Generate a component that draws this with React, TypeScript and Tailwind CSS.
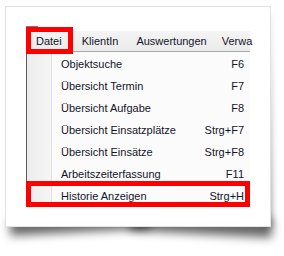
const items: [string, string][] = [
  ["Objektsuche", "F6"],
  ["Übersicht Termin", "F7"],
  ["Übersicht Aufgabe", "F8"],
  ["Übersicht Einsatzplätze", "Strg+F7"],
  ["Übersicht Einsätze", "Strg+F8"],
  ["Arbeitszeiterfassung", "F11"],
  ["Historie Anzeigen", "Strg+H"],
];

export default function App() {
  return (
    <div
      className="relative w-[284px] h-[256px] bg-white pl-[5px] pt-[6px] overflow-hidden"
      style={{ fontFamily: '"Liberation Sans", Arial, sans-serif' }}
    >
      {/* lifted corner shadows */}
      <div className="absolute left-[10px] top-[216px] w-[140px] h-[16px] bg-black/60 blur-[5px] -rotate-[3deg]" />
      <div className="absolute left-[130px] top-[216px] w-[142px] h-[18px] bg-black/60 blur-[5px] rotate-[3deg]" />
      <div className="absolute left-[262px] top-[14px] w-[10px] h-[212px] bg-gradient-to-b from-black/5 to-black/40 blur-[3px]" />

      <div className="relative w-[266px] h-[221px] bg-white border border-[#e2e2e2] pl-[20px] pt-[19px]">
        <div className="relative w-[224px] h-[181px] text-[11px] text-[#14142a]">
          {/* window edge left */}
          <div className="absolute left-0 top-0 w-[12px] h-[2px] bg-[#7a7a7a]" />
          <div className="h-[5px] border-l border-[#5c5c5c]" />

          {/* menu bar */}
          <div className="flex items-center h-[21px] bg-gradient-to-b from-[#f4f4f4] to-[#ebebeb] border-b border-[#a8a8a8] border-l border-l-[#5c5c5c]">
            <span className="ml-[9px]">Datei</span>
            <span className="ml-[20px]">KlientIn</span>
            <span className="ml-[18px]">Auswertungen</span>
            <span className="ml-[15px]">Verwa</span>
          </div>

          {/* dropdown */}
          <div className="flex border-l border-[#5c5c5c] bg-[#fbfbfb] pt-[1px]">
            <div className="w-[25px] bg-gradient-to-r from-[#ececec] to-[#f6f6f6] border-r border-[#e2e2e2]" />
            <div className="flex-1 pl-[9px] pr-[6px]">
              {items.map(([label, key]) => (
                <div key={label} className="flex items-center justify-between h-[22px]">
                  <span>{label}</span>
                  <span>{key}</span>
                </div>
              ))}
            </div>
          </div>

          {/* red highlights */}
          <div className="absolute left-0 top-[1px] w-[47px] h-[27px] border-[5px] border-[#ff0000]" />
          <div className="absolute left-0 top-[155px] w-[224px] h-[26px] border-[5px] border-[#ff0000]" />
        </div>
      </div>
    </div>
  );
}
